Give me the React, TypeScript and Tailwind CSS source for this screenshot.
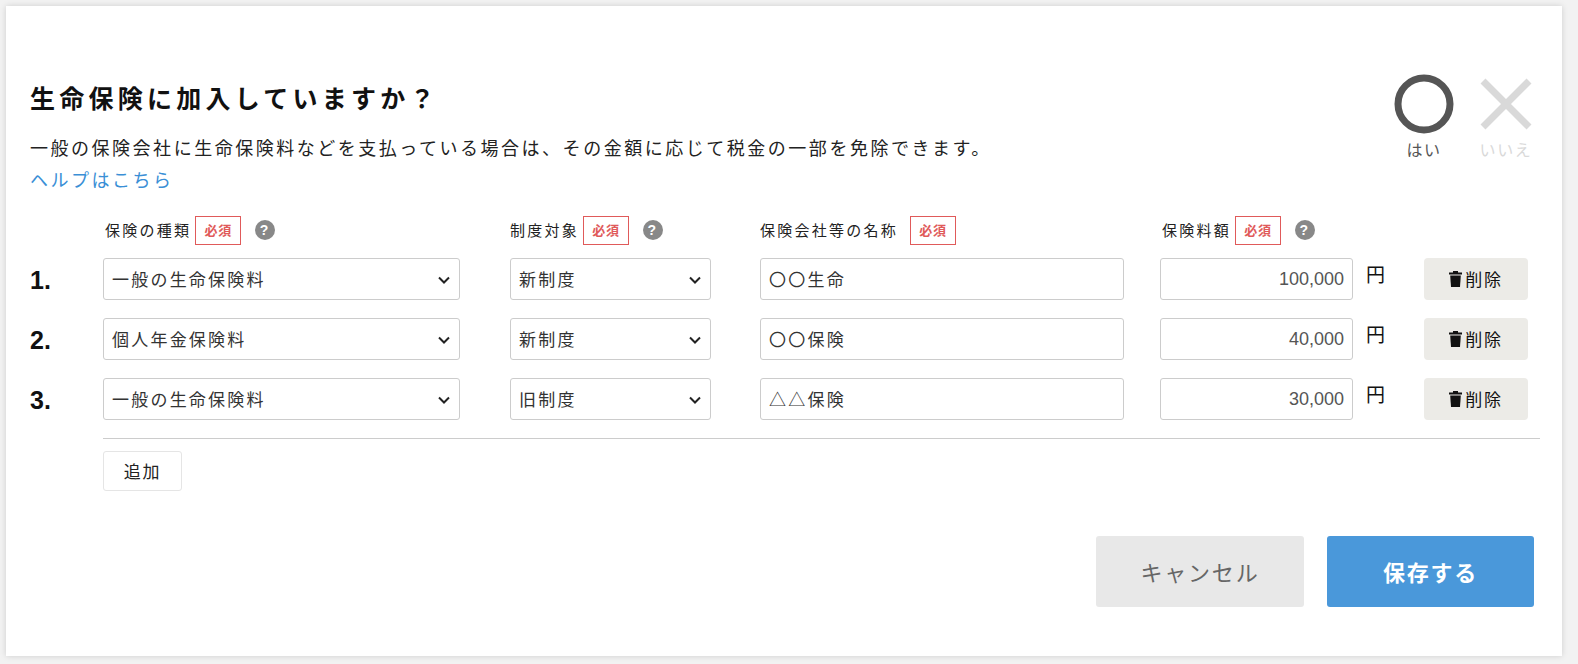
import React from "react";

const font = { fontFamily: '"Noto Sans CJK JP", "Noto Sans", sans-serif' };
const num = { fontFamily: '"Liberation Sans", Arial, sans-serif' };

function Req() {
  return <span className="shrink-0 inline-flex items-center justify-center border border-[#e05a5a] text-[#e05a5a] text-[13px] font-bold w-[46px] h-[29px] ml-[4px] tracking-[0.05em]">必須</span>;
}
function Q() {
  return <span className="shrink-0 inline-flex items-center justify-center w-[20px] h-[20px] rounded-full bg-[#888] text-white text-[14px] font-bold ml-[14px]" style={num}>?</span>;
}
function Chevron() {
  return (
    <svg width="14" height="14" viewBox="0 0 14 14" className="absolute right-[8px] top-[14px]">
      <path d="M2 4.5 L7 9.5 L12 4.5" stroke="#222" strokeWidth="2" fill="none" />
    </svg>
  );
}
function Sel({ w, text }: { w: string; text: string }) {
  return (
    <div className={`relative shrink-0 ${w} h-[42px] border border-[#ccc] rounded-[3px] flex items-center px-[8px] text-[17px] tracking-[0.13em] text-[#333]`}>
      {text}
      <Chevron />
    </div>
  );
}
function Trash() {
  return (
    <svg width="13" height="16" viewBox="0 0 13 16" className="mr-[3px]">
      <rect x="0" y="1.5" width="13" height="2" fill="#111" />
      <rect x="4" y="0" width="5" height="2" fill="#111" />
      <path d="M1.2 4.5 H11.8 L11 16 H2 Z" fill="#111" />
    </svg>
  );
}

const rows = [
  { n: "1.", a: "一般の生命保険料", b: "新制度", c: "〇〇生命", d: "100,000" },
  { n: "2.", a: "個人年金保険料", b: "新制度", c: "〇〇保険", d: "40,000" },
  { n: "3.", a: "一般の生命保険料", b: "旧制度", c: "△△保険", d: "30,000" },
];

export default function App() {
  return (
    <div className="w-[1578px] h-[664px] bg-[#f2f2f2] pt-[6px] pl-[6px] pr-[16px] pb-[8px]" style={font}>
      <div className="bg-white w-[1556px] h-[650px] shadow-[0_0_6px_rgba(0,0,0,0.15)] pl-[24px] pr-[22px] pt-[67px] relative">
        <div className="flex justify-between">
          <div>
            <h1 className="text-[25px] font-bold text-[#111] leading-[48px] tracking-[0.17em]">生命保険に加入していますか？</h1>
            <p className="text-[18px] text-[#222] mt-[10px] leading-[32px] tracking-[0.14em]">一般の保険会社に生命保険料などを支払っている場合は、その金額に応じて税金の一部を免除できます。</p>
            <a className="text-[18px] text-[#3a8fd6] leading-[32px] block tracking-[0.14em]">ヘルプはこちら</a>
          </div>
          <div className="flex gap-[20px] mr-[3px] mt-[0px]">
            <div className="flex flex-col items-center w-[62px]">
              <svg width="62" height="62" viewBox="0 0 62 62"><circle cx="31" cy="31" r="26" stroke="#555" strokeWidth="7" fill="none" /></svg>
              <span className="text-[16px] text-[#555] mt-[2px] tracking-[0.1em]">はい</span>
            </div>
            <div className="flex flex-col items-center w-[62px]">
              <svg width="62" height="62" viewBox="0 0 62 62"><path d="M8 8 L54 54 M54 8 L8 54" stroke="#d9d9d9" strokeWidth="7" /></svg>
              <span className="text-[16px] text-[#d9d9d9] mt-[2px] tracking-[0.1em]">いいえ</span>
            </div>
          </div>
        </div>

        <div className="flex items-center h-[34px] mt-[18px] text-[15px] text-[#222] tracking-[0.15em]">
          <div className="w-[73px] shrink-0" />
          <div className="w-[407px] shrink-0 flex items-center pl-[2px]">保険の種類<Req /><Q /></div>
          <div className="w-[250px] shrink-0 flex items-center">制度対象<Req /><Q /></div>
          <div className="w-[400px] shrink-0 flex items-center">保険会社等の名称<span className="ml-[8px] flex"><Req /></span></div>
          <div className="flex items-center pl-[2px]">保険料額<Req /><Q /></div>
        </div>

        {rows.map((r, i) => (
          <div key={i} className={`flex items-center h-[42px] ${i === 0 ? "mt-[11px]" : "mt-[18px]"}`}>
            <div className="w-[73px] shrink-0 text-[25px] font-bold text-[#111] pt-[4px]" style={num}>{r.n}</div>
            <Sel w="w-[357px]" text={r.a} />
            <div className="w-[50px] shrink-0" />
            <Sel w="w-[201px]" text={r.b} />
            <div className="w-[49px] shrink-0" />
            <div className="w-[364px] shrink-0 h-[42px] border border-[#ccc] rounded-[3px] flex items-center px-[8px] text-[17px] text-[#333] tracking-[0.13em]">{r.c}</div>
            <div className="w-[36px] shrink-0" />
            <div className="w-[193px] shrink-0 h-[42px] border border-[#ccc] rounded-[3px] flex items-center justify-end px-[8px] text-[18px] text-[#555]" style={num}>{r.d}</div>
            <div className="w-[71px] shrink-0 pl-[13px] text-[19px] text-[#111] self-start pt-[2px]">円</div>
            <div className="w-[104px] shrink-0 h-[42px] rounded-[4px] bg-[#ecebe7] flex items-center justify-center text-[17px] text-[#111] tracking-[0.1em]"><Trash />削除</div>
          </div>
        ))}

        <div className="ml-[73px] mt-[18px] border-t border-[#ccc]" />
        <div className="ml-[73px] mt-[12px] w-[79px] h-[40px] border border-[#e5e5e5] rounded-[3px] flex items-center justify-center text-[17px] text-[#222] tracking-[0.1em]">追加</div>

        <div className="flex justify-end gap-[23px] mt-[45px] mr-[6px]">
          <div className="w-[208px] h-[71px] rounded-[3px] bg-[#e8e8e8] flex items-center justify-center text-[22px] text-[#666] tracking-[0.08em]">キャンセル</div>
          <div className="w-[207px] h-[71px] rounded-[3px] bg-[#4a98da] flex items-center justify-center text-[22px] font-bold text-white tracking-[0.08em]">保存する</div>
        </div>
      </div>
    </div>
  );
}
